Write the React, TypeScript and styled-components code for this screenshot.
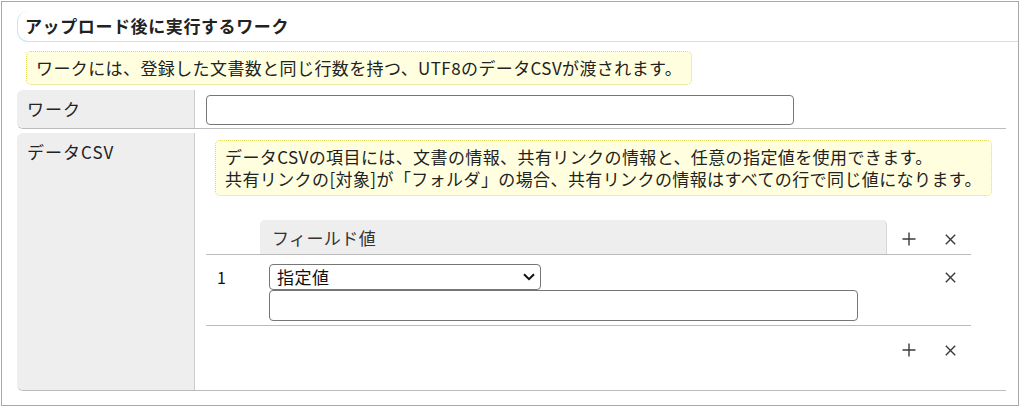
import React from "react";
import styled, { createGlobalStyle } from "styled-components";

const GlobalStyle = createGlobalStyle`
  html, body { margin: 0; padding: 0; background: #fff; }
  body {
    font-family: "Noto Sans CJK JP", "Noto Sans", sans-serif;
    color: #222;
  }
  * { box-sizing: border-box; }
`;

const Frame = styled.div`
  margin: 1px 0 0 1px;
  width: 1018px;
  height: 405px;
  border: 1px solid #a9a9a9;
  padding: 9px 0 0 15px;
`;

const SectionTitle = styled.h2`
  margin: 0;
  height: 31px;
  padding-left: 7px;
  border-left: 1px solid #c3eae5;
  border-bottom: 1px solid #c3eae5;
  border-radius: 11px 0 0 11px;
  font-size: 17px;
  font-weight: 700;
  line-height: 29px;
  letter-spacing: 0.6px;
  color: #222;
`;

const Notice = styled.div<{ $ml: number; $mt: number }>`
  width: fit-content;
  margin: ${(p) => p.$mt}px 0 0 ${(p) => p.$ml}px;
  padding: 5px 9px;
  background: #ffffe0;
  border: 1px dotted #e2dc5a;
  border-radius: 5px;
  font-size: 17px;
  line-height: 22px;
  letter-spacing: 0.4px;
  color: #222;
  white-space: nowrap;
`;

const Table = styled.div`
  margin-top: 5px;
  width: 989px;
  display: flex;
  flex-direction: column;
  gap: 4px;
`;

const Row = styled.div`
  display: grid;
  grid-template-columns: 178px 1fr;
  border-bottom: 1px solid #bbb;
  border-radius: 6px 0 0 6px;
  overflow: hidden;
`;

const Label = styled.div`
  background: #eee;
  border-right: 1px solid #ccc;
  padding: 8px 10px;
  font-size: 17px;
  line-height: 22px;
  letter-spacing: 1px;
  color: #222;
`;

const Cell = styled.div<{ $pad: string }>`
  padding: ${(p) => p.$pad};
`;

const TextBox = styled.input<{ $w: number; $h: number }>`
  display: block;
  width: ${(p) => p.$w}px;
  height: ${(p) => p.$h}px;
  border: 1px solid #767676;
  border-radius: 4px;
  background: #fff;
  font-family: inherit;
  font-size: 16px;
  padding: 0 6px;
  margin: 0;
`;

const SelectWrap = styled.div`
  position: relative;
  width: 272px;
  height: 26px;
`;

const Select = styled.select`
  appearance: none;
  display: block;
  width: 100%;
  height: 100%;
  border: 1px solid #767676;
  border-radius: 4px;
  background: #fff;
  font-family: inherit;
  font-size: 17px;
  line-height: 22px;
  letter-spacing: 0.5px;
  color: #111;
  padding: 0 0 0 7px;
  margin: 0;
`;

const Chevron = styled.svg`
  position: absolute;
  right: 6px;
  top: 9px;
  pointer-events: none;
`;

const SubTable = styled.div`
  margin-top: 24px;
  width: 765px;
  display: flex;
  flex-direction: column;
`;

const SubRow = styled.div<{ $line?: boolean; $h?: number }>`
  display: grid;
  grid-template-columns: 54px 627px 43px 41px;
  ${(p) => (p.$h ? `height: ${p.$h}px;` : "")}
  border-bottom: ${(p) => (p.$line ? "1px solid #bbb" : "none")};
`;

const HeadCell = styled.div`
  height: 34px;
  background: #eee;
  border-right: 1px solid #d6d6d6;
  border-radius: 5px 5px 0 0;
  padding: 7px 0 0 12px;
  font-size: 17px;
  line-height: 22px;
  letter-spacing: 0.4px;
  color: #333;
`;

const IconCell = styled.div<{ $top?: number }>`
  display: flex;
  justify-content: center;
  align-items: ${(p) => (p.$top !== undefined ? "flex-start" : "center")};
  padding-top: ${(p) => p.$top ?? 0}px;
  color: #333;
`;

const IndexCell = styled.div`
  padding: 9px 0 0 11px;
  font-size: 16px;
  line-height: 26px;
  color: #111;
`;

const FieldCell = styled.div`
  padding: 9px 0 4px 9px;
`;

const Empty = styled.div``;

const PlusIcon = () => (
  <svg width="14" height="14" viewBox="0 0 14 14">
    <path d="M7 0.5V13.5M0.5 7H13.5" stroke="#3a3a3a" strokeWidth="1.4" />
  </svg>
);

const CloseIcon = () => (
  <svg width="11" height="11" viewBox="0 0 11 11">
    <path d="M0.8 0.8L10.2 10.2M10.2 0.8L0.8 10.2" stroke="#3a3a3a" strokeWidth="1.4" />
  </svg>
);

export default function App() {
  return (
    <>
      <GlobalStyle />
      <Frame>
        <SectionTitle>アップロード後に実行するワーク</SectionTitle>
        <Notice $ml={9} $mt={9}>
          ワークには、登録した文書数と同じ行数を持つ、UTF8のデータCSVが渡されます。
        </Notice>
        <Table>
          <Row>
            <Label>ワーク</Label>
            <Cell $pad="5px 0 2px 11px">
              <TextBox $w={588} $h={30} />
            </Cell>
          </Row>
          <Row>
            <Label>データCSV</Label>
            <Cell $pad="7px 0 16px 11px">
              <Notice $ml={9} $mt={0}>
                データCSVの項目には、文書の情報、共有リンクの情報と、任意の指定値を使用できます。
                <br />
                共有リンクの[対象]が「フォルダ」の場合、共有リンクの情報はすべての行で同じ値になります。
              </Notice>
              <SubTable>
                <SubRow $line>
                  <Empty />
                  <HeadCell>フィールド値</HeadCell>
                  <IconCell $top={12}>
                    <PlusIcon />
                  </IconCell>
                  <IconCell $top={14}>
                    <CloseIcon />
                  </IconCell>
                </SubRow>
                <SubRow $line>
                  <IndexCell>1</IndexCell>
                  <FieldCell>
                    <SelectWrap>
                      <Select defaultValue="fixed">
                        <option value="fixed">指定値</option>
                      </Select>
                      <Chevron width="12" height="8" viewBox="0 0 12 8">
                        <path d="M1 1.2L6 6.2L11 1.2" fill="none" stroke="#111" strokeWidth="2" />
                      </Chevron>
                    </SelectWrap>
                    <TextBox $w={589} $h={31} />
                  </FieldCell>
                  <Empty />
                  <IconCell $top={17}>
                    <CloseIcon />
                  </IconCell>
                </SubRow>
                <SubRow $h={48}>
                  <Empty />
                  <Empty />
                  <IconCell>
                    <PlusIcon />
                  </IconCell>
                  <IconCell>
                    <CloseIcon />
                  </IconCell>
                </SubRow>
              </SubTable>
            </Cell>
          </Row>
        </Table>
      </Frame>
    </>
  );
}
